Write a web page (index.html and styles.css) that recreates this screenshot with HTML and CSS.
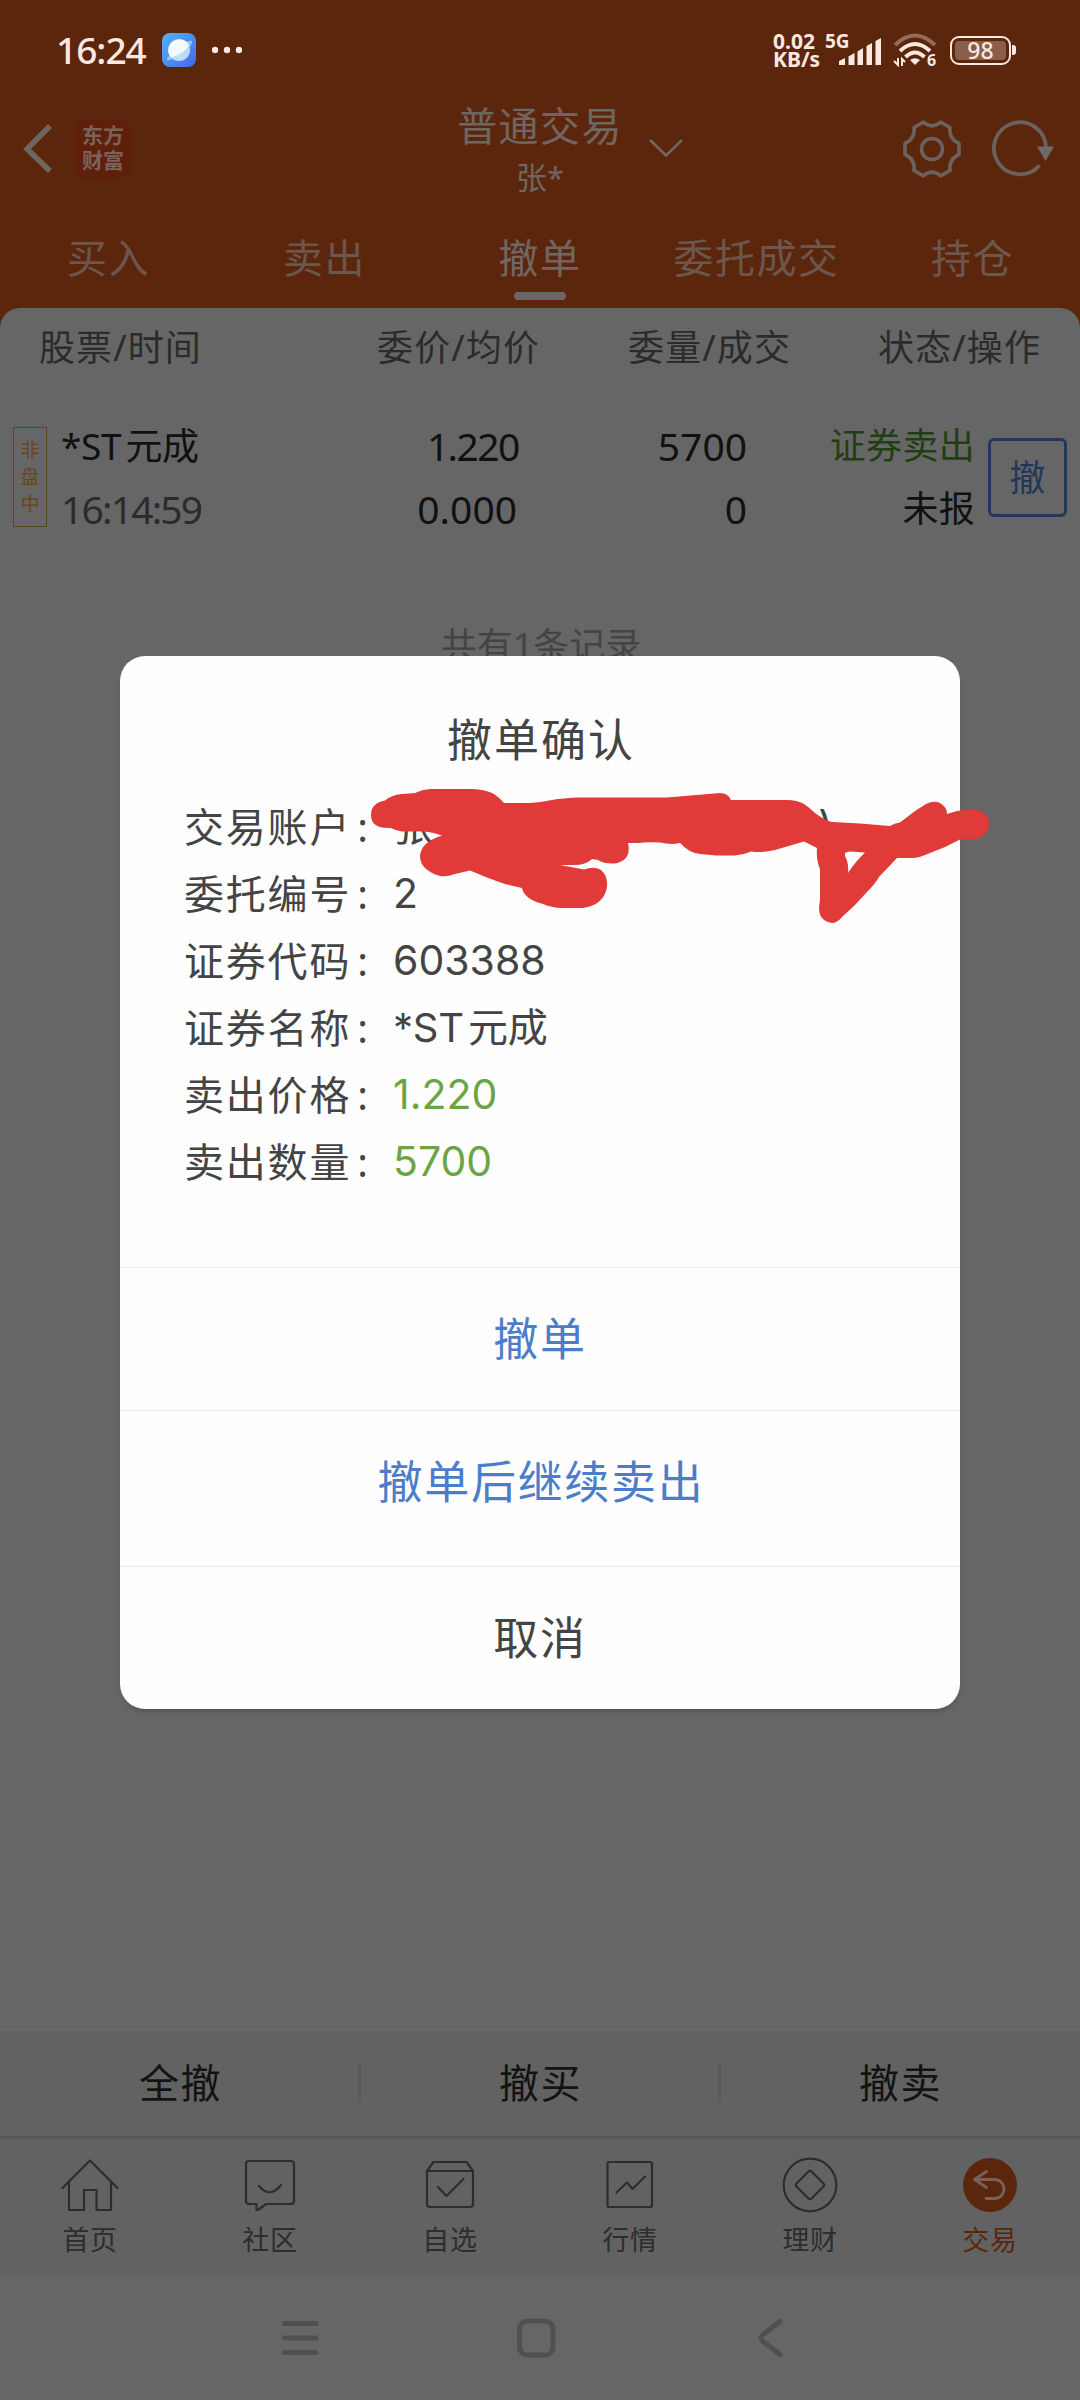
FILE: index.html
```html
<!DOCTYPE html>
<html lang="zh-CN">
<head>
<meta charset="utf-8">
<title>普通交易</title>
<link rel="stylesheet" href="styles.css">
</head>
<body>
<div class="screen">
  <header class="top">
    <div class="status">
      <span class="clock">16:24</span>
      <svg class="app-badge" width="34" height="34" viewBox="0 0 34 34">
        <defs>
          <linearGradient id="sky" x1="0" y1="0" x2="1" y2="1"><stop offset="0" stop-color="#55b4f0"/><stop offset="1" stop-color="#4468ec"/></linearGradient>
        </defs>
        <rect width="34" height="34" rx="8" fill="url(#sky)"/>
        <path d="M24 9Q29 7 30 8Q31 11 24 18Q17 24 10 26Q5 28 5 27Q4 25 9 21Z" fill="#8fc8f7"/>
        <circle cx="17" cy="17" r="11" fill="#b9dcfb"/>
        <path d="M9 24.500A11 11 0 1 1 27 12Q22 21 9 24.500Z" fill="#f4faff"/>
      </svg>
      <svg class="dots" width="30" height="8" viewBox="0 0 30 8" fill="#fbe9e1"><circle cx="3" cy="4" r="3.200"/><circle cx="15" cy="4" r="3.200"/><circle cx="27" cy="4" r="3.200"/></svg>
      <div class="speed"><span>0.02</span><span>KB/s</span></div>
      <div class="cell">
        <span class="gen">5G</span>
        <svg class="bars" width="43" height="27" viewBox="0 0 43 27" fill="#fbe9e1"><path d="M0 23l6-3v7H0zM9.500 18.500l6-3.500v12h-6zM18.500 13.500l5.500-3.500v17h-5.500zM27.500 8l5.500-3v22h-5.500zM36.500 3l5.500-3v27h-5.500z"/></svg>
      </div>
      <svg class="wifi" width="46" height="34" viewBox="0 0 46 34" fill="none" stroke="#fbe9e1" stroke-width="4">
        <path d="M2 12Q22 -7 42 12" stroke="#946b56"/>
        <path d="M7 18Q22 4 37 18"/><path d="M12.500 24Q22 15 31.500 24"/>
        <path d="M22 32l-5-5q5-3.500 10 0z" fill="#fbe9e1" stroke="none"/>
        <path d="M5 25v7l-4-4M9 33v-7l3 3" stroke-width="2"/>
        <text x="34" y="33" class="wifi-gen">6</text>
      </svg>
      <div class="battery"><span class="charge">98</span></div>
    </div>

    <div class="titlebar">
      <svg class="back" width="34" height="52" viewBox="0 0 34 52" fill="none" stroke="#6f6661" stroke-width="5.500"><path d="M30 4L7 27L30 49"/></svg>
      <div class="brand"><span>东方</span><span>财富</span></div>
      <div class="account"><span class="title">普通交易</span><span class="holder">张*</span></div>
      <svg class="down" width="34" height="20" viewBox="0 0 34 20" fill="none" stroke="#6f6661" stroke-width="2.600"><path d="M1 2L17 17.500L33 2"/></svg>
      <svg class="gear" width="60" height="60" viewBox="0 0 60 60" fill="none" stroke="#6b625e" stroke-width="3.600" stroke-linejoin="round">
        <circle cx="30" cy="30" r="10.500"/>
        <path d="M21.200 3.200Q30 10.500 38.800 3.200L48 8.500Q46.500 19.500 57 24.500V35.500Q46.500 40.500 48 51.500L38.800 56.800Q30 49.500 21.200 56.800L12 51.500Q13.500 40.500 3 35.500V24.500Q13.500 19.500 12 8.500Z"/>
      </svg>
      <svg class="reload" width="66" height="60" viewBox="0 0 66 60" fill="none" stroke="#6b625e" stroke-width="3.800"><path d="M49.500 46.500A26 26 0 1 1 56 28.500"/><path d="M47 27.500h17L55.500 42z" fill="#6b6b68" stroke="none"/></svg>
    </div>

    <nav class="tabs">
      <span>买入</span><span>卖出</span><span class="active">撤单</span><span>委托成交</span><span>持仓</span>
    </nav>
  </header>

  <main class="panel">
    <div class="columns"><span>股票/时间</span><span>委价/均价</span><span>委量/成交</span><span>状态/操作</span></div>
    <div class="order">
      <div class="tag"><span>非</span><span>盘</span><span>中</span></div>
      <div class="pair left"><span class="stock">*ST<i></i>元成</span><span class="time">16:14:59</span></div>
      <div class="pair"><span class="price">1.220</span><span>0.000</span></div>
      <div class="pair"><span>5700</span><span>0</span></div>
      <div class="pair cn"><span class="sell">证券卖出</span><span>未报</span></div>
      <div class="cancel">撤</div>
    </div>
    <p class="total">共有1条记录</p>
  </main>

  <div class="bulk"><span>全撤</span><span>撤买</span><span>撤卖</span></div>

  <nav class="menu">
    <div class="item"><svg width="60" height="60" viewBox="0 0 60 60"><path d="M2.500 33L30 5.500L57.500 33M9 27V55H24V35H36.500V55H51V27"/></svg><span>首页</span></div>
    <div class="item"><svg width="60" height="60" viewBox="0 0 60 60"><path d="M9 6H51Q54 6 54 9V46Q54 49 51 49H26L18 55H16.500V49H9Q6 49 6 46V9Q6 6 9 6ZM19 31Q30 44 41 30"/></svg><span>社区</span></div>
    <div class="item"><svg width="60" height="60" viewBox="0 0 60 60"><path d="M7 16L13.500 7H46.500L53 16V49Q53 52 50 52H10Q7 52 7 49ZM7 16H53M18 32L26.500 41L43.500 24"/></svg><span>自选</span></div>
    <div class="item"><svg width="60" height="60" viewBox="0 0 60 60"><path d="M9 7H50Q52 7 52 9V50Q52 52 50 52H9Q7.500 52 7.500 50V9Q7.500 7 9 7ZM16.500 37.500L27 27.500L32.500 34L45 21.500"/></svg><span>行情</span></div>
    <div class="item"><svg width="60" height="60" viewBox="0 0 60 60"><circle cx="30" cy="30" r="26.300"/><path d="M28.500 16.500Q30 15 31.500 16.500L43.500 28.500Q45 30 43.500 31.500L31.500 43.500Q30 45 28.500 43.500L16.500 31.500Q15 30 16.500 28.500Z"/></svg><span>理财</span></div>
    <div class="item current"><svg width="60" height="60" viewBox="0 0 60 60"><circle cx="30" cy="30" r="27" class="disc"/><path d="M26.500 16.500L14.500 24.500L26.500 32.500M15 24.500H34.500A9.500 9.500 0 0 1 34.500 43.500H26" class="arrow"/></svg><span>交易</span></div>
  </nav>

  <div class="system">
    <svg width="1080" height="124" viewBox="0 0 1080 124" fill="none" stroke="#505050" stroke-width="5" stroke-linecap="round" stroke-linejoin="round">
      <path d="M284.500 47.500H316M284.500 62H316M284.500 76.500H316"/>
      <rect x="519.500" y="45" width="33.500" height="34" rx="8"/>
      <path d="M780 45.500L762.500 59Q759.500 62 762.500 65L780 78.500"/>
    </svg>
  </div>

  <section class="dialog">
    <h1>撤单确认</h1>
    <dl>
      <div><dt>交易账户</dt><dd class="masked"><span>张</span><span>)</span></dd></div>
      <div><dt>委托编号</dt><dd>2</dd></div>
      <div><dt>证券代码</dt><dd>603388</dd></div>
      <div><dt>证券名称</dt><dd class="name">*ST<i></i>元成</dd></div>
      <div><dt>卖出价格</dt><dd class="green">1.220</dd></div>
      <div><dt>卖出数量</dt><dd class="green">5700</dd></div>
    </dl>
    <button class="blue">撤单</button>
    <button class="blue tall">撤单后继续卖出</button>
    <button>取消</button>
  </section>

  <svg class="scribble" width="640" height="150" viewBox="360 780 640 150">
    <path fill="#e13b39" fill-rule="evenodd" d="M371 814Q371 802 385 799.500Q391 794 402 793L415 792Q422 788.500 430 788H473Q484 788.500 492 792Q498 795 504 802L530 802Q540 801.500 552 799Q562 797 580 796.500L667 796.500L720 792Q728 792 731 799L787 799Q797 799 804 803Q810 807 815 812Q824 819 832 821L860 822.500L890 825Q894 822 900 821.500L915 810L926 803Q934 799 940 802Q947 806 947 813L957 810L974 808Q989 811 989.500 824Q987 836 974 838.500Q967 837 960 838.500L945 846L925 854Q918 857 913 857H897L879 876Q875 883 867 891L855 904L842 916Q837 922 832 922Q819 920 819 907L820 898V868Q816 859 817 847L804 840.500L775 849Q762 852 751 850.500Q743 854 735 854.500H716L700 853Q689 852 680 842Q671 844 660 841.500Q648 841 638 842H628Q632 859 615 862.500Q604 863 598 859L592 858Q586 864 574 864H560L584 868.500Q594 865 601 869Q608 875 607 886Q604 904 583 907H560Q550 906 543 903Q524 898 522 887L505 883Q490 878 470 869.500L455 873Q447 876 440 875Q420 869 420 855Q421 841 442 834.500Q432 831 424 830.500H402Q396 830 391 827Q371 828 371 814ZM845 852Q847 850.500 850 850.500L865 851.500Q855 861 848 872Q849 862 845 855Z"/>
  </svg>
</div>
</body>
</html>
```
FILE: styles.css
```css
* { box-sizing: border-box; }
body { margin: 0; background: #666; }
.screen {
  position: relative;
  width: 1080px;
  height: 2400px;
  display: flex;
  flex-direction: column;
  overflow: hidden;
  background: #666;
  font-family: "Noto Sans", "Noto Sans CJK SC", sans-serif;
}
span { white-space: nowrap; }
i { display: inline-block; width: 4px; }

/* header */
.top { height: 328px; flex: none; background: #5c260d; }
.status { height: 100px; padding-left: 56px; display: flex; align-items: center; color: #fbe9e1; }
.clock { width: 106px; font-size: 37px; font-weight: 500; line-height: 50px; letter-spacing: -1px; }
.dots { margin-left: 16px; }
.speed { margin-left: 531px; width: 51px; display: flex; flex-direction: column; font: 700 21px/18.5px "Noto Sans", sans-serif; }
.cell { display: flex; flex-direction: column; width: 58px; height: 32px; position: relative; }
.gen { padding-left: 1px; font: 700 19px/15px "Noto Sans", sans-serif; }
.bars { position: absolute; left: 15px; top: 4px; }
.wifi { margin-left: 11px; }
.wifi-gen { font: 700 16px "Noto Sans", sans-serif; fill: #fbe9e1; stroke: none; }
.battery { position: relative; margin-left: 11px; width: 61px; height: 29px; padding: 3px; border: 2.5px solid #fbe9e1; border-radius: 9px; }
.battery::after { content: ""; position: absolute; left: 60px; top: 7px; width: 4px; height: 10px; border-radius: 0 3px 3px 0; background: #fbe9e1; }
.charge { display: block; height: 19px; border-radius: 4px; background: #8a5f49; text-align: center; font: 500 23px/19px "Noto Sans", sans-serif; }

.titlebar { height: 98px; padding-left: 20px; display: flex; align-items: flex-start; color: #6f6661; }
.back { margin-top: 22px; }
.brand { margin: 20px 0 0 21px; width: 56px; height: 58px; padding: 3px 0 0; border-radius: 10px; background: #601f0b; display: flex; flex-direction: column; align-items: center; font-size: 21px; font-weight: 700; line-height: 25px; color: #79625a; }
.account { width: 220px; margin-left: 299px; display: flex; flex-direction: column; align-items: center; }
.title { font-size: 40px; line-height: 52px; letter-spacing: 1.400px; }
.holder { font-size: 31px; line-height: 50px; }
.down { margin: 38px 0 0 -1px; }
.gear { margin: 19px 0 0 219px; }
.reload { margin: 19px 0 0 28px; }

.tabs { display: grid; grid-template-columns: repeat(5, 1fr); padding-top: 34px; height: 110px; color: #6b574d; text-align: center; }
.tabs span { font-size: 40px; line-height: 52px; letter-spacing: 1.600px; padding-left: 1px; }
.tabs .active { color: #706762; display: flex; flex-direction: column; align-items: center; gap: 8px; padding-left: 0; }
.active::after { content: ""; width: 52px; height: 8px; border-radius: 4px; background: #6b6967; }

/* order list */
.panel { flex: none; margin-top: -20px; height: 1723px; border-radius: 20px 20px 0 0; background: #666; color: #111; }
.columns { display: grid; grid-template-columns: 302px 238px 251px 250px; line-height: 79px; height: 78px; font-size: 36px; letter-spacing: 1.100px; color: #2b2b2b; text-align: right; }
.columns span:first-child { text-align: left; padding-left: 39px; }
.order { display: grid; grid-template-columns: 34px 170px 302px 230px 226px 92px; margin: 27px 0 0 13px; }
.tag { margin-top: 14px; height: 100px; border: 1.500px solid #5d4420; display: flex; flex-direction: column; align-items: center; justify-content: center; font-size: 19px; line-height: 27px; color: #68481a; }
.pair { display: flex; flex-direction: column; text-align: right; font-size: 39px; line-height: 63px; padding-right: 2px; padding-top: 1px; }
.pair.left { text-align: left; padding-left: 14px; }
.pair.cn { font-size: 36px; padding-right: 0; letter-spacing: 0.300px; padding-right: 0; }
.price { letter-spacing: -1.600px; margin-right: -1.600px; }
.stock { font-size: 37px; letter-spacing: -0.300px; }
.time { color: #2b2b2b; letter-spacing: -1.800px; }
.sell { color: #1f3f12; }
.cancel { margin: 25px 0 0 13px; width: 79px; height: 79px; border: 3px solid #22375c; border-radius: 6px; text-align: center; font-size: 36px; line-height: 73px; color: #22375c; }
.total { margin: 81px 0 0 2px; text-align: center; font-size: 36px; line-height: 50px; letter-spacing: 0; color: #444; }

/* bottom bars */
.bulk { height: 108px; flex: none; display: grid; grid-template-columns: repeat(3, 1fr); border-bottom: 3px solid #595959; background: #626262; color: #131313; text-align: center; font-size: 40px; line-height: 103px; letter-spacing: 1.600px; }
.bulk span { padding-left: 1px; }
.bulk span + span { margin-left: -2px; padding-left: 3px; background: linear-gradient(#595959, #595959) 0 34px / 3px 37px no-repeat; }
.menu { height: 137px; flex: none; display: grid; grid-template-columns: repeat(6, 1fr); background: #626262; color: #2d2d2d; }
.item { display: flex; flex-direction: column; align-items: center; padding-top: 16px; font-size: 27px; line-height: 40px; letter-spacing: 0.800px; }
.item svg { fill: none; stroke: #2d2d2d; stroke-width: 2.200; stroke-linecap: round; stroke-linejoin: round; margin-bottom: 5px; flex: none; }
.item .disc { fill: #5c260d; stroke: none; }
.item .arrow { stroke: #776159; stroke-width: 2.800; }
.current { color: #5c260d; }
.system { height: 124px; }

/* modal */
.dialog { position: absolute; left: 120px; top: 656px; width: 840px; height: 1053px; border-radius: 25px; background: #fefefe; color: #444; overflow: hidden; box-shadow: 0 3px 5px -2px #4a4a4a; }
.dialog h1 { margin: 53px 0 0; padding-left: 2px; text-align: center; font-size: 45px; font-weight: 400; line-height: 62px; letter-spacing: 2px; }
.dialog dl { margin: 22px 0 0 64px; height: 474px; font-size: 40px; line-height: 67px; }
.dialog dl div { display: flex; }
.dialog dt { width: 209px; letter-spacing: 1.800px; display: flex; }
.dialog dt::after { content: ":"; margin-left: 6px; }
.dialog dd { margin: 0; font-family: Inter, "Noto Sans CJK SC", sans-serif; font-size: 41px; }
.dialog .name { font-size: 40px; letter-spacing: -0.200px; }
.masked { width: 440px; display: flex; justify-content: space-between; }
.green { color: #6aa544; }
button { display: block; width: 100%; height: 143px; padding: 0; border: 0; border-top: 1.500px solid #ececec; background: none; text-align: center; font: 400 45px/142px "Noto Sans", "Noto Sans CJK SC", sans-serif; letter-spacing: 1.700px; color: #444; }
.blue { color: #4c7dc9; }
.tall { height: 156px; padding: 0 0 13px 2px; }
.scribble { position: absolute; left: 360px; top: 781px; }
```
